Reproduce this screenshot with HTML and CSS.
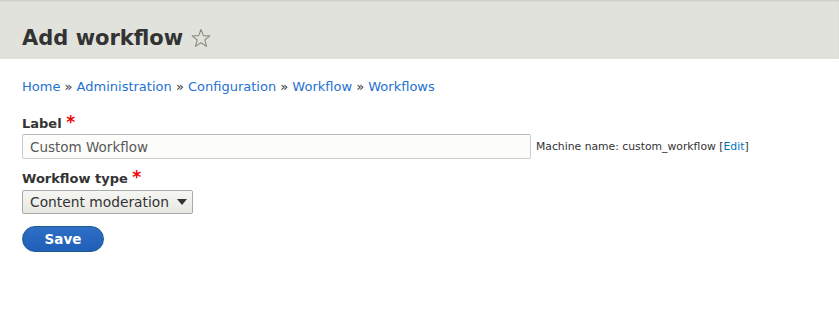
FILE: index.html
```html
<!DOCTYPE html>
<html>
<head>
    <title>Add workflow</title>
    <link rel="stylesheet" href="styles.css">
</head>
<body>
    <div class="branding">
        <h1 class="page-title">Add workflow
            <svg class="star" width="20" height="20" viewBox="0 0 20 20">
                <path d="M10 1.5 L12.4 7.6 L18.8 7.9 L13.8 12 L15.5 18.4 L10 14.8 L4.5 18.4 L6.2 12 L1.2 7.9 L7.6 7.6 Z" fill="none" stroke="#8d8d80" stroke-width="1.1" stroke-linejoin="round"/>
            </svg>
        </h1>
    </div>

    <div class="content">
        <nav class="breadcrumb">
            <a href="#">Home</a> » <a href="#">Administration</a> » <a href="#">Configuration</a> » <a href="#">Workflow</a> » <a href="#">Workflows</a>
        </nav>

        <div class="form-item">
            <label for="label">Label <span class="required">*</span></label>
            <div class="field-row">
                <input type="text" id="label" class="form-text" value="Custom Workflow">
                <span class="machine-name">Machine name: custom_workflow [<a href="#">Edit</a>]</span>
            </div>
        </div>

        <div class="form-item">
            <label for="type">Workflow type <span class="required">*</span></label>
            <div class="form-select">
                <span>Content moderation</span>
                <span class="arrow"></span>
            </div>
        </div>

        <button class="button-primary">Save</button>
    </div>
</body>
</html>
```

FILE: styles.css
```css
body {
    margin: 0;
    font-family: "DejaVu Sans", Verdana, sans-serif;
    font-size: 13px;
    color: #333;
    background: #fff;
}
a {
    color: #0074bd;
    text-decoration: none;
}
.branding {
    background-color: #e0e2db;
    height: 59px;
    padding: 0 22px;
    box-sizing: border-box;
    box-shadow: inset 0 2px 2px -1px #c8cac2;
    display: flex;
    align-items: flex-end;
}
.page-title {
    margin: 0 0 7px 0;
    font-size: 21px;
    font-weight: bold;
    color: #333;
    display: flex;
    align-items: center;
    gap: 8px;
    line-height: 28px;
}
.star {
    display: block;
}
.content {
    padding: 20px 22px;
}
.breadcrumb {
    font-size: 13px;
    line-height: 16px;
    color: #333;
    margin-bottom: 21px;
}
.breadcrumb a {
    color: #1f72d0;
}
.form-item {
    margin-bottom: 12px;
}
.form-item label {
    display: block;
    font-weight: bold;
    font-size: 13px;
    line-height: 16px;
    margin-bottom: 2px;
}
.required {
    color: #e00;
    font-size: 17px;
    line-height: 10px;
}
.field-row {
    display: flex;
    align-items: center;
    gap: 5px;
}
.form-text {
    width: 509px;
    height: 25px;
    box-sizing: border-box;
    border: 1px solid #ccc;
    border-top-color: #b8b8b8;
    border-radius: 2px;
    background: #fcfcfa;
    font-family: inherit;
    font-size: 13.5px;
    color: #595959;
    padding: 2px 7px;
    margin: 0;
}
.machine-name {
    font-size: 10.8px;
    color: #333;
}
.form-select {
    display: inline-flex;
    align-items: center;
    gap: 8px;
    height: 24px;
    margin-top: 1px;
    box-sizing: border-box;
    border: 1px solid #aaa;
    border-radius: 2px;
    background: linear-gradient(#f6f6f2, #e8e8e3);
    padding: 0 5px 0 7px;
    font-size: 13.8px;
    color: #333;
}
.arrow {
    width: 0;
    height: 0;
    border-left: 5px solid transparent;
    border-right: 5px solid transparent;
    border-top: 6px solid #333;
}
.button-primary {
    margin-top: 0;
    width: 82px;
    height: 26px;
    border: 1px solid #1e5c90;
    border-radius: 13px;
    background: linear-gradient(#2e6ec5, #1f5fb8);
    color: #fff;
    font-family: inherit;
    font-weight: bold;
    font-size: 13.5px;
    cursor: pointer;
    padding: 0;
}
```
